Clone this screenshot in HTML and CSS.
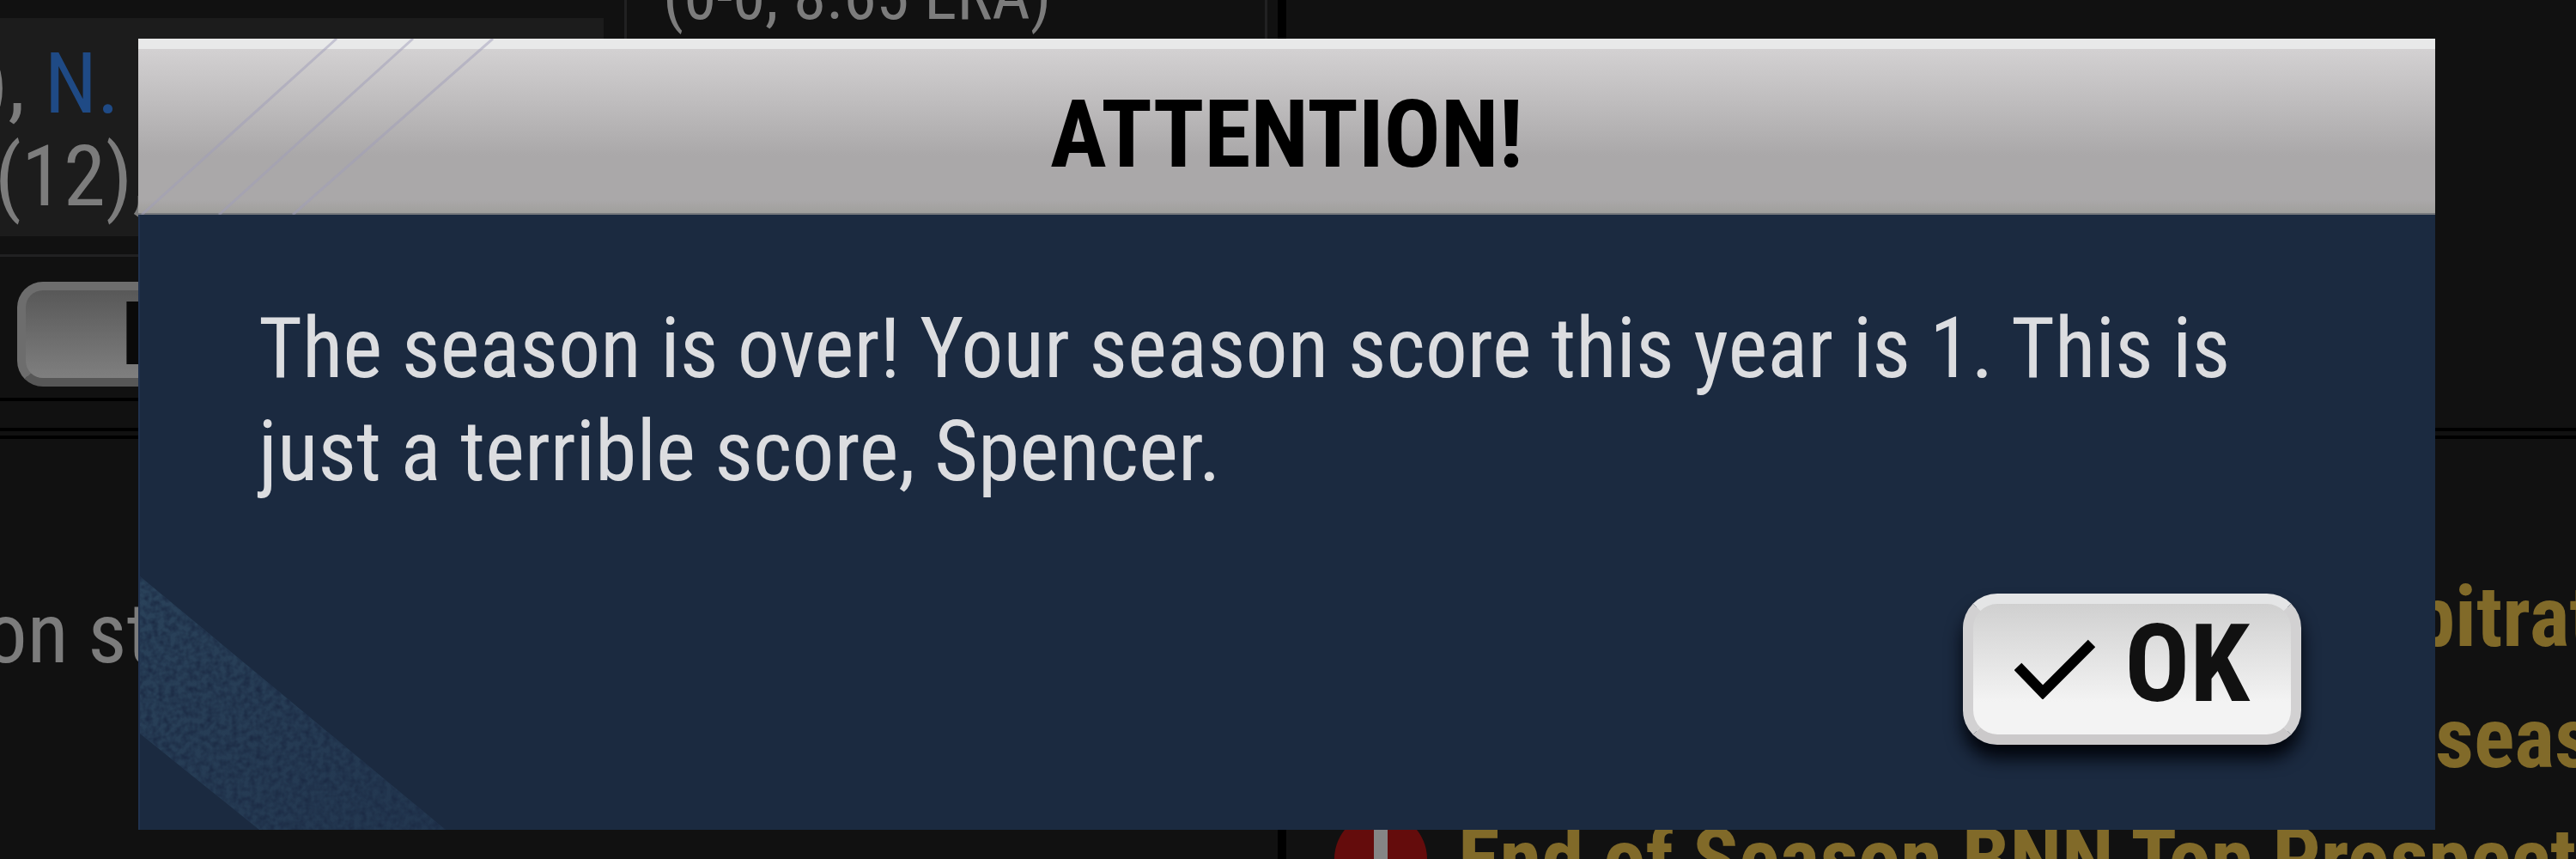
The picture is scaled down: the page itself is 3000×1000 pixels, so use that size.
FILE: index.html
```html
<!DOCTYPE html>
<html lang="en">
<head>
  <meta charset="UTF-8" />
  <title>Attention!</title>
  <meta name="viewport" content="width=device-width, initial-scale=1.0" />
  <link rel="stylesheet" href="styles.css">
</head>
<body>

  <main class="board">
    <section class="column">
      <div class="summary">
        <div class="notes">
          <div class="notes-box">
            <p>), <a href="#">N.</a></p>
            <p>(12),</p>
          </div>
        </div>
        <div class="pitcher">(0-0, 8.65 ERA)</div>
      </div>
      <div class="actions">
        <button type="button" class="box-score">B</button>
      </div>
      <div class="news">on st</div>
    </section>

    <section class="column alerts-column">
      <div class="top-panel"></div>
      <div class="alerts">
        <div class="alert alert-arbitration"><span>bitration</span></div>
        <div class="alert alert-season"><span>season</span></div>
        <div class="alert">
          <svg class="alert-icon" viewBox="0 0 108 108" aria-hidden="true">
            <circle cx="54" cy="54" r="54" fill="#640c0c" />
            <rect x="46" y="16" width="16" height="48" fill="#858585" />
            <rect x="46" y="74" width="16" height="16" fill="#858585" />
          </svg>
          <span>End of Season BNN Top Prospects</span>
        </div>
      </div>
    </section>
  </main>

  <div class="overlay">
    <div class="dialog" role="dialog" aria-labelledby="dialog-title">
      <header class="dialog-header">
        <svg class="header-lines" viewBox="0 0 420 205" aria-hidden="true">
          <path d="M231 0L4 205M320 0L94 205M413 0L180 205" />
        </svg>
        <h1 id="dialog-title">ATTENTION!</h1>
      </header>
      <div class="dialog-body">
        <svg class="stripe" viewBox="0 0 356 295" aria-hidden="true">
          <defs>
            <linearGradient id="fade" x1="0" y1="0" x2="1" y2="1">
              <stop offset="0" stop-color="#2a425a" />
              <stop offset="1" stop-color="#22364f" />
            </linearGradient>
            <filter id="grain" x="0" y="0" width="1" height="1" color-interpolation-filters="sRGB">
              <feTurbulence type="fractalNoise" baseFrequency="0.14" numOctaves="2" seed="4" />
              <feColorMatrix values="0 0 0 0 0.11  0 0 0 0 0.17  0 0 0 0 0.27  2 0 0 0 -0.7" />
              <feComposite operator="in" in2="SourceGraphic" />
            </filter>
          </defs>
          <polygon points="0,0 356,295 139,295 0,183" fill="url(#fade)" />
          <polygon points="0,0 356,295 139,295 0,183" filter="url(#grain)" />
        </svg>
        <p class="message">The season is over! Your season score this year is 1. This is just a terrible score, Spencer.</p>
        <div class="dialog-actions">
          <button type="button" class="ok-button">
            <svg class="check" viewBox="0 0 94 70" aria-hidden="true">
              <path d="M4 32L33 62L90 5" />
            </svg>
            OK
          </button>
        </div>
      </div>
    </div>
  </div>

</body>
</html>
```
FILE: styles.css
```css
:root {
  --board-bg: #111;
  --cell-bg: #1c1c1c;
  --rule: #212122;
  --dim-text: #7c7c7c;
  --dim-link: #1f4a85;
  --gold: #816a29;
  --panel: #1b2a40;
  --text: #dcdde0;
  --font: "Roboto Condensed", "Liberation Sans Narrow", Roboto, sans-serif;
}

* {
  margin: 0;
  padding: 0;
  box-sizing: border-box;
}

html, body {
  height: 100%;
  overflow: hidden;
  font-family: var(--font);
  background-color: var(--board-bg);
}

.board {
  display: grid;
  grid-template-columns: 1498px 1fr;
  height: 100vh;
  overflow: hidden;
  color: var(--dim-text);
  font-size: 99px;
  line-height: 108px;
  white-space: nowrap;
}

.column {
  display: flex;
  flex-direction: column;
  min-width: 0;
  overflow: hidden;
  border-right: 10px solid #000;
}

.summary {
  display: flex;
  flex: none;
  height: 299px;
  padding-right: 12px;
  border-bottom: 3px solid var(--rule);
}

.notes {
  width: 730px;
  padding: 21px 24px 21px 0;
  border-right: 3px solid var(--rule);
}

.notes-box {
  height: 254px;
  padding-top: 22px;
  background-color: var(--cell-bg);
}

.notes-box p {
  margin-left: -6px;
}

.notes-box p:first-child {
  margin-left: -22px;
}

.notes-box a {
  color: var(--dim-link);
  text-decoration: none;
}

.pitcher {
  flex: 1;
  margin-top: -4px;
  padding-left: 42px;
  border-right: 3px solid var(--rule);
  font-size: 77px;
  line-height: 0;
}

.actions {
  flex: none;
  height: 168px;
  padding: 29px 20px;
  border-bottom: 4px solid #000;
}

.box-score {
  width: 300px;
  height: 122px;
  border: 10px solid #6d6d6d;
  border-bottom-color: #575757;
  border-radius: 30px;
  background: linear-gradient(#585858, #7f7f7f);
  font: bold 102px/102px var(--font);
  color: #0a0a0a;
}

.news {
  flex: 1;
  margin-top: 31px;
  padding-top: 172px;
  border-top: 13px double #000;
  text-indent: -18px;
}

.alerts-column {
  border-right: 0;
}

.top-panel {
  flex: none;
  height: 498px;
}

.alerts {
  flex: 1;
  padding: 136px 0 0 56px;
  border-top: 13px double #000;
  font-weight: bold;
  color: var(--gold);
}

.alert {
  display: flex;
  align-items: center;
  gap: 36px;
  height: 141px;
}

.alert-arbitration {
  padding-left: 1256px;
}

.alert-season {
  padding-left: 1282px;
}

.alert-icon {
  flex: none;
  width: 108px;
  height: 108px;
}

.overlay {
  position: absolute;
  inset: 0;
  display: flex;
  padding: 45px 164px 34px 161px;
}

.dialog {
  flex: 1;
  display: flex;
  flex-direction: column;
  background-color: var(--panel);
}

.dialog-header {
  position: relative;
  padding: 41px 0 32px;
  border-top: 12px solid #e8e9e9;
  border-bottom: 2px solid #77797d;
  background: linear-gradient(#d3d1d2, #aaa8a9 65%, #aaa8a9 92%, #a09f9c);
  text-align: center;
}

.dialog-header h1 {
  font-size: 110px;
  line-height: 118px;
  color: #000;
}

.header-lines {
  position: absolute;
  top: -12px;
  left: 0;
  width: 420px;
  height: 205px;
  fill: none;
  stroke: #9f9dba;
  stroke-width: 3;
  stroke-opacity: 0.5;
}

.dialog-body {
  position: relative;
  flex: 1;
  display: flex;
  flex-direction: column;
  justify-content: space-between;
  padding: 96px 156px 99px 138px;
  border-left: 2px solid #20324f;
}

.stripe {
  position: absolute;
  left: 0;
  bottom: 0;
  width: 356px;
  height: 295px;
}

.message {
  font-size: 98px;
  line-height: 120px;
  color: var(--text);
}

.dialog-actions {
  display: flex;
  justify-content: flex-end;
}

.ok-button {
  display: flex;
  align-items: center;
  gap: 34px;
  height: 176px;
  padding: 0 48px 12px;
  border: 12px solid #d2d1d2;
  border-top-color: #e4e5e6;
  border-bottom-color: #cbc9ca;
  border-radius: 40px;
  background: linear-gradient(#d0d0d0, #f3f3f3 75%);
  box-shadow: 0 16px 20px #02050c;
  font: bold 126px/140px var(--font);
  color: #111;
  cursor: pointer;
}

.check {
  width: 94px;
  height: 70px;
  margin-top: 12px;
  fill: none;
  stroke: #000;
  stroke-width: 12;
}
```
